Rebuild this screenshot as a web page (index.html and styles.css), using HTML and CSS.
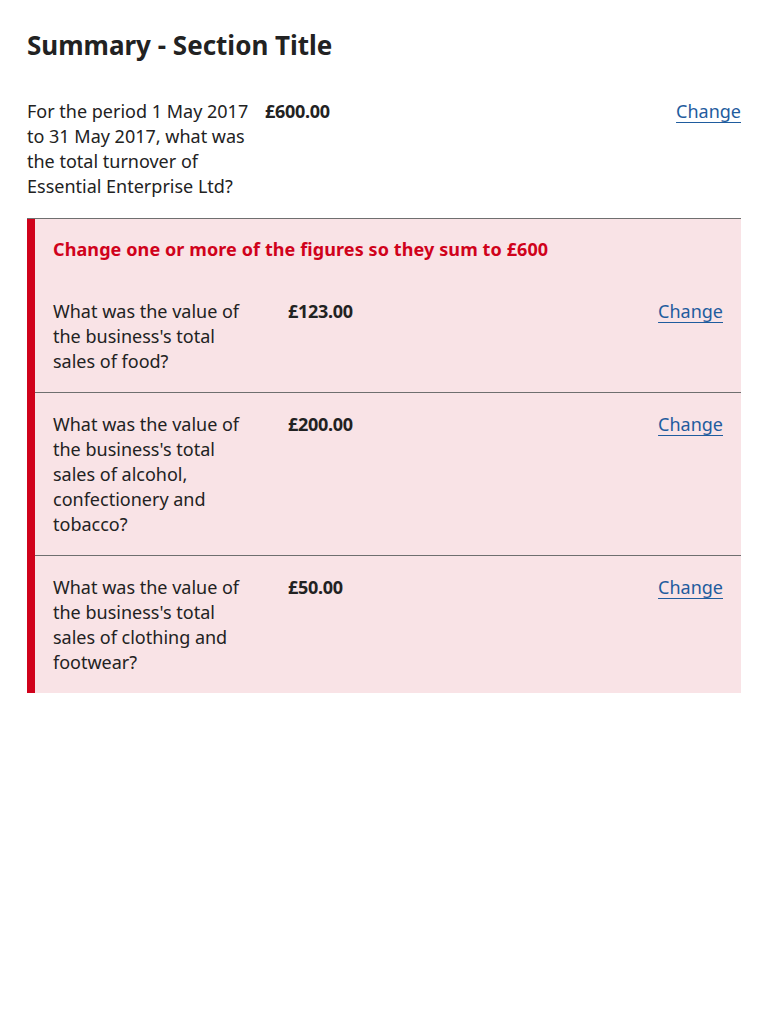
FILE: index.html
```html
<!DOCTYPE html>
<html lang="en">
<head>
<meta charset="utf-8">
<title>Summary</title>
<link rel="stylesheet" href="styles.css">
</head>
<body>
<main class="page">
  <h1 class="title">Summary - Section Title</h1>
  <dl class="summary">
    <div class="row row--outer">
      <dt class="key">For the period 1 May 2017 to 31 May 2017, what was the total turnover of Essential Enterprise Ltd?</dt>
      <dd class="value">£600.00</dd>
      <dd class="action"><a href="#" class="link">Change</a></dd>
    </div>
  </dl>
  <section class="error-box">
    <h2 class="error-title">Change one or more of the figures so they sum to £600</h2>
    <dl class="summary">
      <div class="row row--inner row--border">
        <dt class="key">What was the value of the business's total sales of food?</dt>
        <dd class="value">£123.00</dd>
        <dd class="action"><a href="#" class="link">Change</a></dd>
      </div>
      <div class="row row--inner row--border">
        <dt class="key">What was the value of the business's total sales of alcohol, confectionery and tobacco?</dt>
        <dd class="value">£200.00</dd>
        <dd class="action"><a href="#" class="link">Change</a></dd>
      </div>
      <div class="row row--inner">
        <dt class="key">What was the value of the business's total sales of clothing and footwear?</dt>
        <dd class="value">£50.00</dd>
        <dd class="action"><a href="#" class="link">Change</a></dd>
      </div>
    </dl>
  </section>
</main>
</body>
</html>
```

FILE: styles.css
```css
html, body {
  margin: 0;
  padding: 0;
  background: #ffffff;
}

body {
  font-family: "Noto Sans", "Open Sans", sans-serif;
  color: #222222;
  font-size: 18px;
  line-height: 25px;
}

.page {
  padding: 27px 27px 0 27px;
}

.title {
  margin: 0 0 17px 0;
  font-size: 26px;
  line-height: 36px;
  font-weight: 700;
  color: #222222;
}

.summary {
  margin: 0;
  padding: 0;
}

.row {
  display: grid;
  align-items: start;
}

.row--outer {
  grid-template-columns: 222px 1fr auto;
  column-gap: 16px;
  padding: 19px 0 19px 0;
  border-bottom: 1px solid #6f6f6f;
}

.row--inner {
  grid-template-columns: 200px 1fr auto;
  column-gap: 35px;
  padding: 19px 18px 18px 18px;
}

.row--border {
  border-bottom: 1px solid #6f6f6f;
}

.key,
.value,
.action {
  margin: 0;
}

.value {
  font-weight: 700;
  letter-spacing: -0.3px;
}

.link {
  color: #1f5c9e;
  text-decoration: underline;
  text-underline-offset: 4px;
  text-decoration-thickness: 1px;
}

.error-box {
  background: #f9e3e6;
  border-left: 8px solid #d0021b;
}

.error-title {
  margin: 0;
  padding: 18px 18px 18px 18px;
  font-size: 18px;
  line-height: 25px;
  font-weight: 700;
  letter-spacing: 0.1px;
  color: #d0021b;
}
```
